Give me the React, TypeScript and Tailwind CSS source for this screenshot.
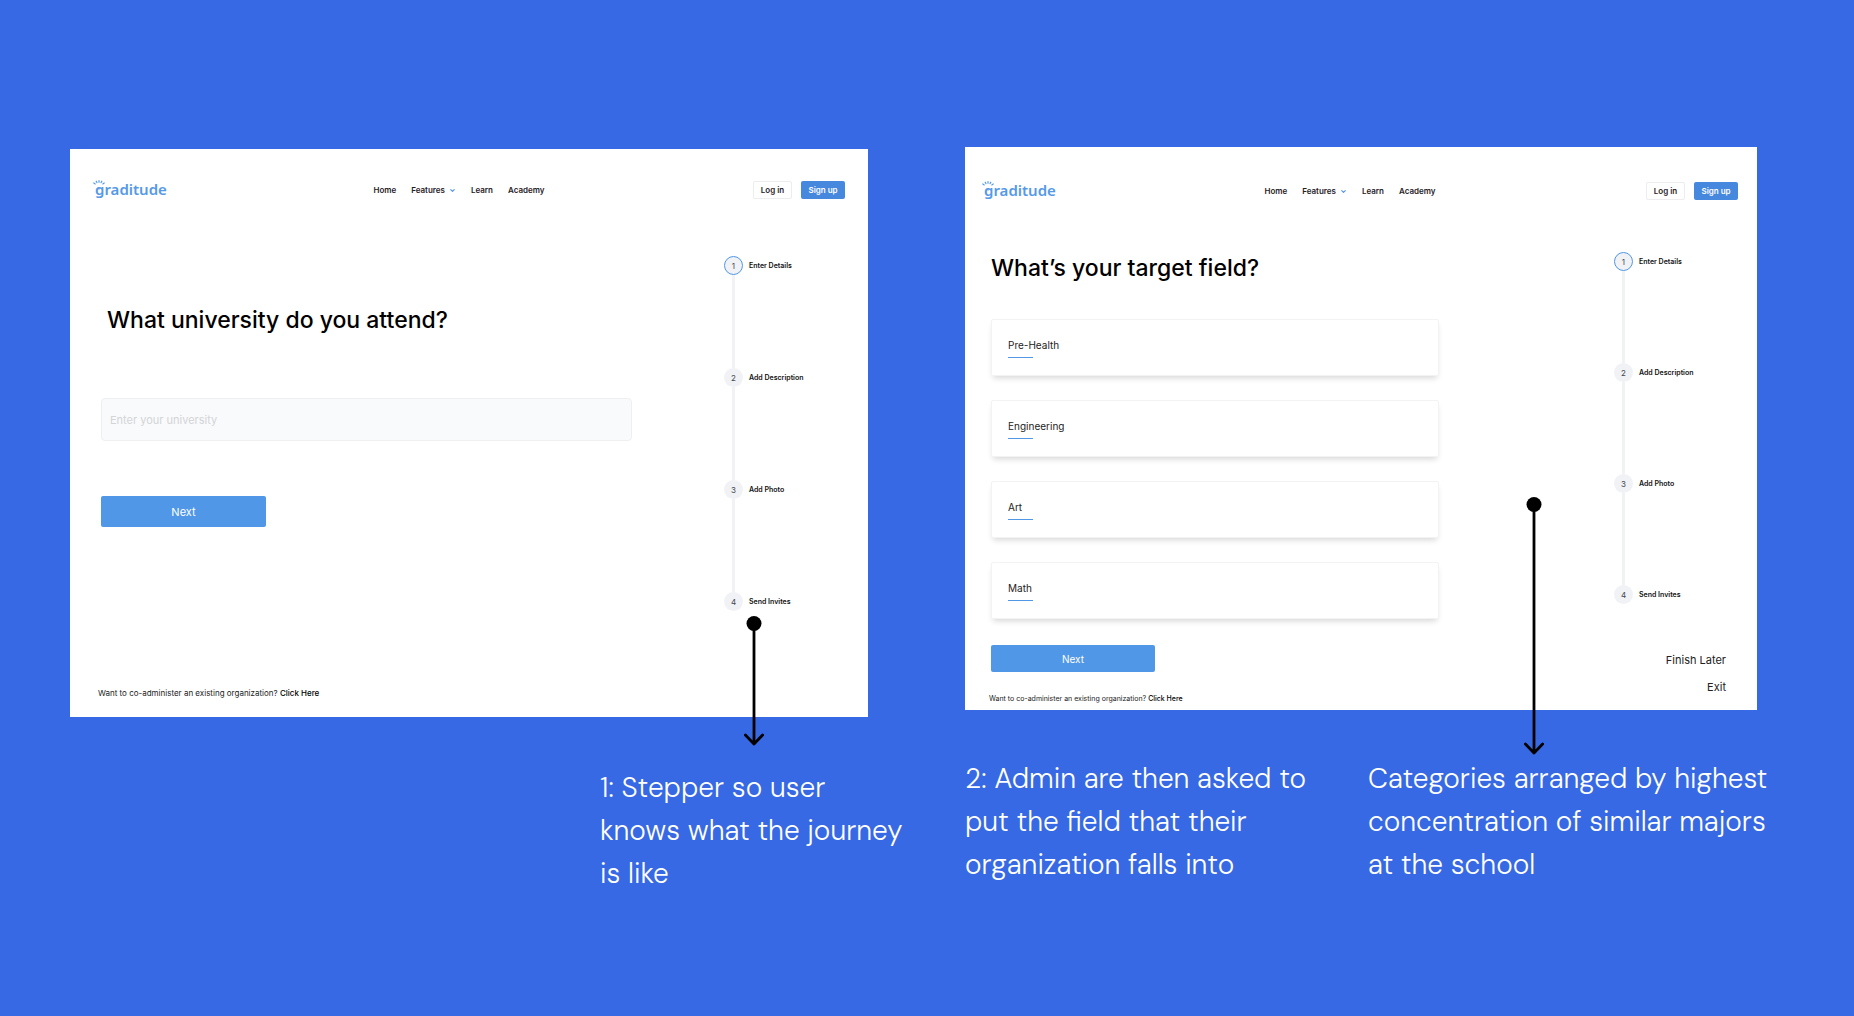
import type { ReactNode } from "react";
import { ChevronDown } from "lucide-react";
import clsx from "clsx";

const STEPS = ["Enter Details", "Add Description", "Add Photo", "Send Invites"];
const FIELDS = ["Pre-Health", "Engineering", "Art", "Math"];

function Logo() {
  return (
    <a href="#" className="relative block w-[70px] pb-0.5 font-['Noto_Sans'] text-[15px] leading-4 font-semibold text-[#5599e8]">
      graditude
      {/* sun rays and smile around the g */}
      <svg className="absolute -top-0.5 -left-0.5 h-[18px] w-3" viewBox="0 0 12 18" fill="none" stroke="#5599e8" strokeLinecap="round">
        <path d="M6 1.6v1.6M3.2 2.2l.7 1.4M8.8 2.2l-.7 1.4M.8 4l1.4.9M11.2 4l-1.4.9" strokeWidth="1.2" />
        <path d="M4.8 9.6c.6.8 2 .8 2.6 0" strokeWidth="0.8" />
      </svg>
    </a>
  );
}

function Header({ className }: { className: string }) {
  return (
    <header className={clsx("flex items-center justify-between", className)}>
      <Logo />
      <nav className="flex items-center gap-[15px] text-[8px] leading-3 font-semibold text-[#1f2126]">
        <a href="#">Home</a>
        <a href="#" className="flex items-center gap-1">
          Features
          <ChevronDown size={7} strokeWidth={4} className="text-[#5599e8]" />
        </a>
        <a href="#">Learn</a>
        <a href="#">Academy</a>
      </nav>
      <div className="flex gap-[9px] text-[8px] leading-3 font-semibold">
        <button className="h-[18px] w-[39px] rounded-xs border border-[#ededf0] text-[#1f2126]">Log in</button>
        <button className="h-[18px] w-11 rounded-xs bg-[#4588de] text-white">Sign up</button>
      </div>
    </header>
  );
}

function Stepper({ lineClass }: { lineClass: string }) {
  return (
    <ol>
      {STEPS.map((label, i) => (
        <li key={label}>
          {i > 0 && <div className={clsx("ml-2 w-[3px] bg-[#f1f2f4]", lineClass)} />}
          <div className="flex items-center gap-1.5">
            <span
              className={clsx(
                "flex size-[19px] items-center justify-center rounded-full bg-[#f1f2f5] text-[8px] leading-3 text-[#44474f]",
                i === 0 && "border border-[#4f97e8]"
              )}
            >
              {i + 1}
            </span>
            <span className="text-[7px] leading-3 font-semibold text-[#111]">{label}</span>
          </div>
        </li>
      ))}
    </ol>
  );
}

function CoAdminister({ className }: { className: string }) {
  return (
    <p className={clsx("leading-3 text-[#222]", className)}>
      Want to co-administer an existing organization?{" "}
      <a href="#" className="font-medium text-black">
        Click Here
      </a>
    </p>
  );
}

function NextButton({ className }: { className: string }) {
  return <button className={clsx("block rounded-xs bg-[#5197e8] text-white", className)}>Next</button>;
}

// callout arrow: dot at the top, open head at the bottom
function Arrow({ height, className }: { height: number; className: string }) {
  return (
    <svg
      className={clsx("absolute w-5", className)}
      width={20}
      height={height}
      viewBox={`0 0 20 ${height}`}
      fill="none"
      stroke="#000"
      strokeWidth="2.8"
      strokeLinecap="round"
      strokeLinejoin="round"
    >
      <circle cx="10" cy="7.5" r="7.5" fill="#000" stroke="none" />
      <path d={`M10 8V${height - 2}M1.4 ${height - 11}L10 ${height - 2}L18.6 ${height - 11}`} />
    </svg>
  );
}

function Caption({ lines, className }: { lines: string[]; className?: string }) {
  return (
    <p className={clsx("font-['DM_Sans','Lato',sans-serif] text-[28px] leading-[43px] font-[350] whitespace-nowrap text-white", className)}>
      {lines.map((line) => (
        <span key={line} className="block">
          {line}
        </span>
      ))}
    </p>
  );
}

function Screen({ children, className }: { children: ReactNode; className: string }) {
  return <section className={clsx("relative bg-white", className)}>{children}</section>;
}

export default function App() {
  return (
    <main className="grid min-h-screen grid-cols-[minmax(0,798fr)_minmax(0,792fr)] items-start gap-[97px] bg-[#3869e4] pt-[147px] pr-[97px] pl-[70px] font-['Inter',sans-serif]">
      <div className="pt-0.5">
        <Screen className="pt-8 pb-[18px]">
          <Header className="pr-[23px] pl-[25px]" />
          <div className="flex pl-7">
            <div className="flex-1 pt-[105px]">
              <div className="mr-[92px] pl-[3px]">
                <h1 className="pl-1.5 text-[23px] leading-8 font-medium text-black">
                  <label htmlFor="university">What university do you attend?</label>
                </h1>
                <input
                  id="university"
                  type="text"
                  placeholder="Enter your university"
                  className="mt-[62px] block h-[43px] w-full rounded-sm border border-[#eeeff1] bg-[#f9fafc] px-2 text-[11px] leading-4 text-black placeholder:text-[#d3d4d6]"
                />
                <NextButton className="mt-[55px] h-[31px] w-[165px] text-[11px] leading-4" />
              </div>
              <CoAdminister className="mt-40 text-[8px]" />
            </div>
            <div className="w-36 pt-[57px]">
              <Stepper lineClass="h-[93px]" />
            </div>
          </div>
          <Arrow height={130} className="top-[467px] right-[104px]" />
        </Screen>
        <Caption className="mt-[49px] ml-[530px]" lines={["1: Stepper so user", "knows what the journey", "is like"]} />
      </div>

      <div>
        <Screen className="pt-[35px] pb-[5px]">
          <Header className="px-[19px]" />
          <div className="flex pl-6">
            <div className="flex-1 pt-[52px]">
              <div className="mr-[175px] pl-0.5">
                <h1 className="text-[23px] leading-8 font-medium text-black">What’s your target field?</h1>
                <div className="mt-[35px] flex flex-col gap-6">
                  {FIELDS.map((field) => (
                    <button
                      key={field}
                      className="h-[57px] rounded-xs border border-[#f3f3f4] px-4 text-left text-[10px] leading-4 text-[#222] shadow-[0_4px_6px_-2px_rgba(0,0,0,0.16)]"
                    >
                      {field}
                      <span className="mt-1 block h-px w-[25px] bg-[#5197e8]" />
                    </button>
                  ))}
                </div>
                <NextButton className="mt-[26px] h-[27px] w-[164px] text-[10px] leading-4" />
              </div>
              <CoAdminister className="mt-[21px] text-[7px]" />
            </div>
            <div className="w-[143px] pt-[52px]">
              <Stepper lineClass="h-[92px]" />
              <div className="mt-12 flex flex-col items-end gap-[11px] pr-[31px] text-[11px] leading-4 text-[#222]">
                <a href="#">Finish Later</a>
                <a href="#">Exit</a>
              </div>
            </div>
          </div>
          <Arrow height={258} className="top-[350px] right-[213px]" />
        </Screen>
        <div className="mt-[47px] flex">
          <Caption className="w-[403px] flex-none" lines={["2: Admin are then asked to", "put the field that their", "organization falls into"]} />
          <Caption lines={["Categories arranged by highest", "concentration of similar majors", "at the school"]} />
        </div>
      </div>
    </main>
  );
}
